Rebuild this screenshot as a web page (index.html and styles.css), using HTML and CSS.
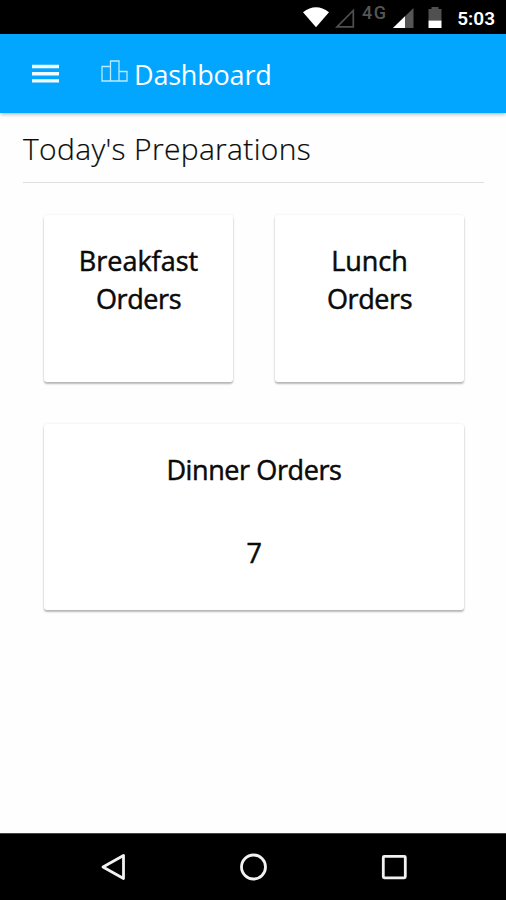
FILE: index.html
```html
<!DOCTYPE html>
<html lang="en">
<head>
<meta charset="utf-8">
<title>Dashboard</title>
<link rel="stylesheet" href="styles.css">
</head>
<body>
<div class="status-bar">
  <svg class="status-icons" width="150" height="34" viewBox="0 0 150 34" aria-hidden="true">
    <path d="M3 12.200Q16 2.500 29 12.200L16 27.200Z" fill="#fff"/>
    <path d="M37 26.800H53.300V10.500Z" fill="none" stroke="#505050" stroke-width="1.700"/>
    <path d="M93 28H113.500V8Z" fill="#555"/>
    <path d="M93 28H105V16.300Z" fill="#fff"/>
    <path d="M128.500 9h3V7h7v2h3v11.500h-13Z" fill="#505050"/>
    <path d="M128.500 20.500h13V28h-13Z" fill="#fff"/>
    <text class="network" x="62" y="19" textLength="24">4G</text>
  </svg>
  <span class="clock">5:03</span>
</div>
<header class="app-bar">
  <svg class="menu-icon" width="27" height="21" viewBox="0 0 27 21" aria-hidden="true"><path d="M0 3.500H27M0 10.700H27M0 17.900H27"/></svg>
  <svg class="board-icon" width="27" height="22" viewBox="0 0 27 22" aria-hidden="true"><path d="M1 6.500H9.500V21H1ZM9.500 1H18V21H9.500ZM18 11.500H26V21H18Z"/></svg>
  <h1 class="app-title">Dashboard</h1>
</header>
<main class="content">
  <h2 class="section-title">Today's Preparations</h2>
  <div class="cards">
    <section class="card"><h3 class="card-title"><span class="loose">Breakfast</span><br>Orders</h3></section>
    <section class="card"><h3 class="card-title"><span class="loose">Lunch</span><br>Orders</h3></section>
    <section class="card wide"><h3 class="card-title">Dinner Orders</h3><p class="count">7</p></section>
  </div>
</main>
<nav class="nav-bar">
  <svg width="28" height="30" viewBox="0 0 28 30" aria-hidden="true"><path d="M25.500 3.500V26.500L5 15Z"/></svg>
  <svg width="28" height="30" viewBox="0 0 28 30" aria-hidden="true"><circle cx="14.500" cy="15" r="12"/></svg>
  <svg width="28" height="30" viewBox="0 0 28 30" aria-hidden="true"><rect x="3.300" y="4.300" width="22" height="21.500" rx="1"/></svg>
</nav>
</body>
</html>
```
FILE: styles.css
```css
* { box-sizing: border-box; }
body {
  display: flex;
  flex-direction: column;
  height: 900px;
  margin: 0;
  background: #fefefe;
  color: #0a0a0a;
  font-family: "Open Sans", sans-serif;
}
h1, h2, h3, p { margin: 0; font-weight: 400; }
svg { display: block; flex: none; }
.status-bar {
  display: flex;
  align-items: center;
  justify-content: flex-end;
  height: 34px;
  padding-right: 11px;
  background: #000;
  color: #fff;
  font-family: Roboto, sans-serif;
}
.status-icons { margin-right: 7px; }
.network { fill: #555; font-size: 18px; font-weight: 500; }
.clock { font-size: 19px; font-weight: 600; line-height: 34px; padding-top: 3px; }
.app-bar {
  display: flex;
  height: 79px;
  padding-left: 32px;
  background: #02a6ff;
  color: #fff;
  box-shadow: 0 1px 4px rgba(0, 0, 0, .35);
}
.menu-icon { margin: 29px 42px 0 0; }
.menu-icon path { stroke: #f0faff; stroke-width: 3.4; }
.board-icon { margin: 26px 6px 0 0; }
.board-icon path { fill: none; stroke: #bce9ff; stroke-width: 1.3; }
.app-title { padding-top: 1px; font-size: 27px; line-height: 79px; letter-spacing: -.2px; }
.content { flex: 1; padding: 0 22px 0 23px; }
.section-title {
  height: 70px;
  padding-top: 1px;
  border-bottom: 1px solid #dedede;
  font-size: 30px;
  font-weight: 300;
  line-height: 70px;
  letter-spacing: .33px;
  -webkit-text-stroke: .2px;
}
.cards {
  display: grid;
  grid-template-columns: 189px 189px;
  grid-template-rows: 167px 186px;
  gap: 42px;
  padding: 32px 21px 0;
}
.card {
  padding-top: 27px;
  border-radius: 3px;
  background: #fff;
  box-shadow: 0 2px 2px rgba(0, 0, 0, .27), 0 0 3px rgba(0, 0, 0, .08);
  text-align: center;
}
.card.wide { grid-column: span 2; }
.card-title, .count {
  font-size: 27px;
  line-height: 38px;
  letter-spacing: -.4px;
  -webkit-text-stroke: .5px;
}
.loose { letter-spacing: 0; }
.count { margin-top: 45px; }
.nav-bar {
  display: flex;
  align-items: center;
  justify-content: center;
  gap: 113px;
  height: 67px;
  border-top: 1px solid #444;
  background: #000;
}
.nav-bar svg { fill: none; stroke: #f2f2f2; stroke-width: 2.8; stroke-linejoin: round; }
```
